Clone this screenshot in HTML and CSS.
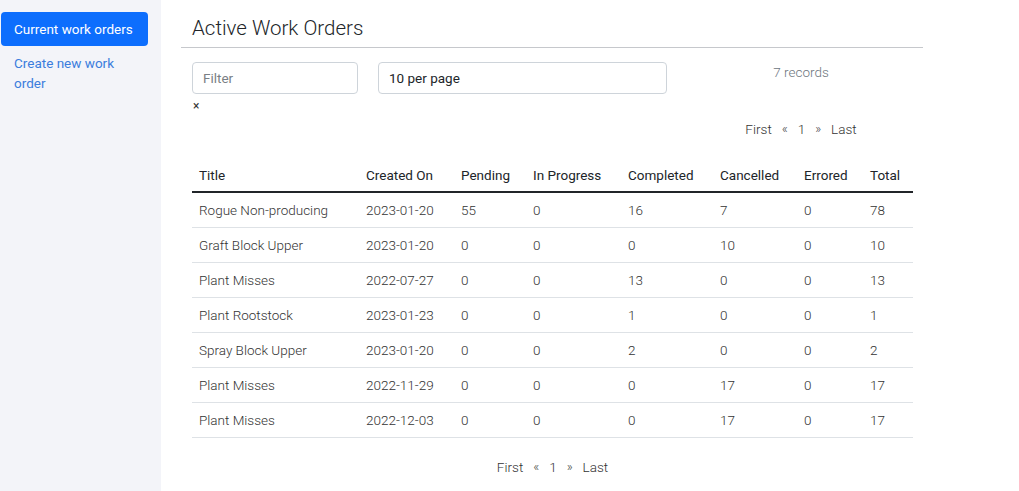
FILE: index.html
```html
<!DOCTYPE html>
<html>
<head>
<meta charset="utf-8">
<link rel="stylesheet" href="styles.css">
</head>
<body>
<div class="layout">
  <nav class="sidebar">
    <a class="nav-link active" href="#">Current work orders</a>
    <a class="nav-link" href="#">Create new work order</a>
  </nav>
  <main class="main">
    <h1 class="title">Active Work Orders</h1>
    <div class="controls">
      <div class="filter-col">
        <input class="form-control" type="text" placeholder="Filter">
        <span class="clear">×</span>
      </div>
      <div class="select-col">
        <div class="form-control select">10 per page</div>
      </div>
      <div class="info-col">
        <div class="records">7 records</div>
        <div class="pager"><span>First</span><span class="arrow">«</span><span>1</span><span class="arrow">»</span><span>Last</span></div>
      </div>
    </div>
    <table class="orders">
      <colgroup>
        <col style="width:167px"><col style="width:95px"><col style="width:72px"><col style="width:95px"><col style="width:92px"><col style="width:84px"><col style="width:66px"><col style="width:50px">
      </colgroup>
      <thead>
        <tr><th>Title</th><th>Created On</th><th>Pending</th><th>In Progress</th><th>Completed</th><th>Cancelled</th><th>Errored</th><th>Total</th></tr>
      </thead>
      <tbody>
        <tr><td>Rogue Non-producing</td><td>2023-01-20</td><td>55</td><td>0</td><td>16</td><td>7</td><td>0</td><td>78</td></tr>
        <tr><td>Graft Block Upper</td><td>2023-01-20</td><td>0</td><td>0</td><td>0</td><td>10</td><td>0</td><td>10</td></tr>
        <tr><td>Plant Misses</td><td>2022-07-27</td><td>0</td><td>0</td><td>13</td><td>0</td><td>0</td><td>13</td></tr>
        <tr><td>Plant Rootstock</td><td>2023-01-23</td><td>0</td><td>0</td><td>1</td><td>0</td><td>0</td><td>1</td></tr>
        <tr><td>Spray Block Upper</td><td>2023-01-20</td><td>0</td><td>0</td><td>2</td><td>0</td><td>0</td><td>2</td></tr>
        <tr><td>Plant Misses</td><td>2022-11-29</td><td>0</td><td>0</td><td>0</td><td>17</td><td>0</td><td>17</td></tr>
        <tr><td>Plant Misses</td><td>2022-12-03</td><td>0</td><td>0</td><td>0</td><td>17</td><td>0</td><td>17</td></tr>
      </tbody>
    </table>
    <div class="pager bottom"><span>First</span><span class="arrow">«</span><span>1</span><span class="arrow">»</span><span>Last</span></div>
  </main>
</div>
</body>
</html>
```
FILE: styles.css
```css
* { box-sizing: border-box; }
html, body { margin: 0; padding: 0; height: 100%; }
body {
  font-family: Roboto, "Liberation Sans", sans-serif;
  font-size: 13.5px;
  color: #212529;
  background: #fff;
}
.layout {
  display: flex;
  min-height: 491px;
}
.sidebar {
  width: 161px;
  flex: none;
  background: #f3f4f9;
  padding: 12px 13px 0 1px;
  display: flex;
  flex-direction: column;
}
.nav-link {
  display: block;
  text-decoration: none;
  color: #3b7ddd;
  font-size: 13.5px;
  line-height: 20px;
  padding: 7px 13px;
  border-radius: 4px;
}
.nav-link.active {
  background: #0d6efd;
  color: #fff;
  white-space: nowrap;
}
.nav-link + .nav-link { padding-top: 7px; padding-right: 20px; }
.main {
  width: 742px;
  margin-left: 20px;
}
.title {
  margin: 0;
  font-size: 20.5px;
  font-weight: 300;
  line-height: 24px;
  padding: 16px 0 7px 11px;
  border-bottom: 1px solid #c6c8cc;
  color: #212529;
}
.controls {
  display: flex;
  padding-left: 11px;
  margin-top: 14px;
}
.filter-col { width: 166px; }
.form-control {
  display: block;
  width: 100%;
  height: 32px;
  border: 1px solid #ced4da;
  border-radius: 4px;
  padding: 0 10px;
  font-family: inherit;
  font-size: 13.5px;
  line-height: 30px;
  color: #212529;
  background: #fff;
}
.form-control::placeholder { color: #7a7f85; }
.clear {
  display: block;
  font-size: 12px;
  line-height: 14px;
  margin-top: 5px;
  padding-left: 1px;
  color: #333;
}
.select-col { width: 289px; margin-left: 20px; }
.info-col { flex: 1; text-align: center; padding-left: 12px; }
.records {
  color: #6c757d;
  font-weight: 300;
  line-height: 20px;
  margin-top: 0;
}
.pager {
  display: flex;
  justify-content: center;
  gap: 10px;
  color: #333;
  line-height: 20px;
  margin-top: 37px;
  font-weight: 300;
}
.pager .arrow { font-size: 13px; color: #444; }
.orders {
  margin-left: 11px;
  margin-top: 19px;
  width: 721px;
  border-collapse: collapse;
  table-layout: fixed;
}
.orders th, .orders td {
  text-align: left;
  padding: 0 7px;
  height: 35px;
  white-space: nowrap;
}
.orders th {
  font-weight: 400;
  border-bottom: 2px solid #212529;
  height: 34px;
  vertical-align: middle;
}
.orders td {
  font-weight: 300;
  color: #333;
  border-bottom: 1px solid #dee2e6;
}
.pager.bottom { margin: 19px 0 0 11px; width: 721px; }
```
